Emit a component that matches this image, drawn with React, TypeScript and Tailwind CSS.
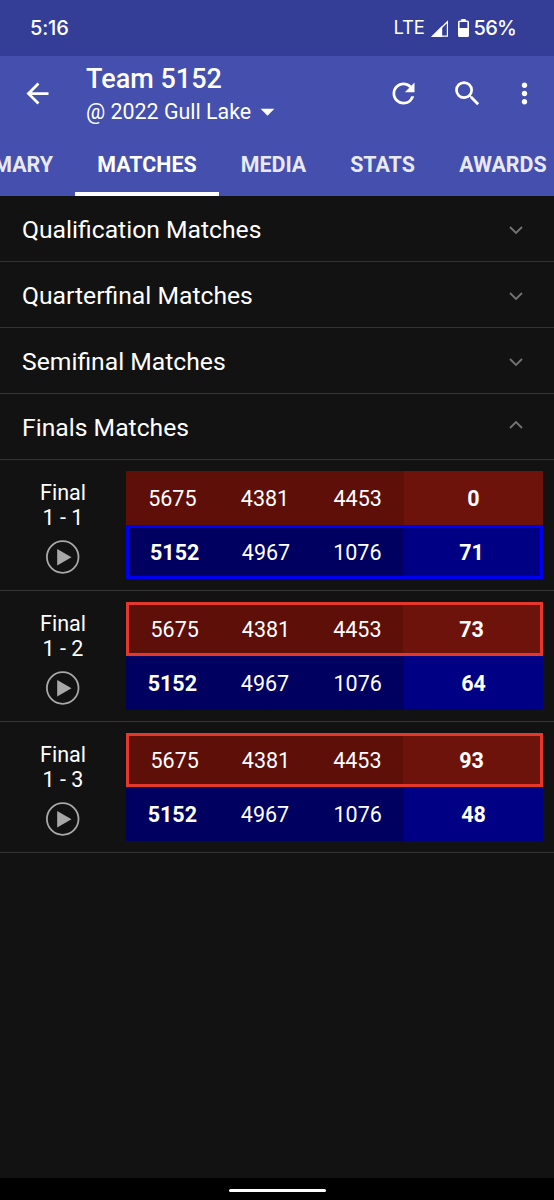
import { useState } from 'react';
import { clsx } from 'clsx';
import { MdArrowBack, MdArrowDropDown, MdMoreVert, MdRefresh, MdSearch } from 'react-icons/md';

interface Alliance {
  teams: string[];
  score: number;
}

interface Match {
  title: string;
  number: string;
  red: Alliance;
  blue: Alliance;
}

const CURRENT_TEAM = '5152';

const tabs = [
  { name: 'Summary', className: 'w-[75px] justify-end pr-[22px]' },
  { name: 'Matches', className: 'w-36 justify-center' },
  { name: 'Media', className: 'w-[109px] justify-center' },
  { name: 'Stats', className: 'w-[109px] justify-center' },
  { name: 'Awards', className: 'w-[132px] justify-center' },
];

const redTeams = ['5675', '4381', '4453'];
const blueTeams = ['5152', '4967', '1076'];

const finals: Match[] = [
  { title: 'Final', number: '1 - 1', red: { teams: redTeams, score: 0 }, blue: { teams: blueTeams, score: 71 } },
  { title: 'Final', number: '1 - 2', red: { teams: redTeams, score: 73 }, blue: { teams: blueTeams, score: 64 } },
  { title: 'Final', number: '1 - 3', red: { teams: redTeams, score: 93 }, blue: { teams: blueTeams, score: 48 } },
];

const sections: { name: string; matches: Match[] }[] = [
  { name: 'Qualification Matches', matches: [] },
  { name: 'Quarterfinal Matches', matches: [] },
  { name: 'Semifinal Matches', matches: [] },
  { name: 'Finals Matches', matches: finals },
];

function StatusBar() {
  return (
    <div className="flex h-14 shrink-0 items-center justify-between bg-[#343e97] pr-[38px] pl-[30px] font-['Inter',sans-serif] text-[20px] font-medium">
      <span className="tracking-[-0.2px]">5:16</span>
      <div className="flex items-center">
        <span className="text-[18.5px] font-normal tracking-[-0.2px]">LTE</span>
        <svg className="ml-1.5 h-[17px] w-[18px]" viewBox="0 0 18 17">
          <path d="M1.8 16.2H16.4V1.8Z" fill="none" stroke="currentColor" strokeWidth="1.2" />
          <path d="M0 17L11.2 5.8V17Z" fill="currentColor" />
        </svg>
        <svg className="ml-[9px] h-[18px] w-[11px]" viewBox="0 0 11 18">
          <path d="M3.3 0H7.7V2H3.3Z" fill="currentColor" />
          <rect x="0.8" y="2.3" width="9.4" height="14.9" rx="0.8" fill="none" stroke="currentColor" strokeWidth="1.6" />
          <path d="M1 9H10V17H1Z" fill="currentColor" />
        </svg>
        <span className="ml-[5px] tracking-[-0.8px]">56%</span>
      </div>
    </div>
  );
}

function Toolbar() {
  return (
    <div className="flex h-[78px] items-center pb-1">
      <button className="ml-[21px]">
        <MdArrowBack className="size-[33px]" />
      </button>
      <div className="ml-8 flex-1 pt-1">
        <h1 className="pt-px text-[27px] leading-8 font-medium">Team {CURRENT_TEAM}</h1>
        <div className="flex items-center text-[21.4px] leading-8">
          <span>@ 2022 Gull Lake</span>
          <MdArrowDropDown className="size-[33px]" />
        </div>
      </div>
      <button className="mr-[31px]">
        <MdRefresh className="size-[33px]" />
      </button>
      <button className="mr-6">
        <MdSearch className="size-[33px]" />
      </button>
      <button className="mr-[13px]">
        <MdMoreVert className="size-[33px]" />
      </button>
    </div>
  );
}

interface TabBarProps {
  active: string;
  onChange: (name: string) => void;
}

function TabBar({ active, onChange }: TabBarProps) {
  return (
    <div className="flex h-[62px] overflow-hidden">
      {tabs.map((tab) => (
        <button
          key={tab.name}
          onClick={() => onChange(tab.name)}
          className={clsx(
            'flex shrink-0 items-center border-b-4 pt-1 text-[21.4px] font-bold uppercase',
            tab.className,
            active === tab.name ? 'border-white text-white' : 'border-transparent text-[#e8e9f4]'
          )}
        >
          {tab.name}
        </button>
      ))}
    </div>
  );
}

interface AllianceRowProps {
  alliance: Alliance;
  color: 'red' | 'blue';
  winner: boolean;
}

function AllianceRow({ alliance, color, winner }: AllianceRowProps) {
  const isRed = color === 'red';

  return (
    <div
      className={clsx(
        'flex h-[54px]',
        isRed ? 'bg-[#5d0f08]' : 'bg-[#000060]',
        winner && 'border-3',
        winner && (isRed ? 'border-[#e5382c]' : 'border-[#0000f0]')
      )}
    >
      {alliance.teams.map((team) => (
        <div
          key={team}
          className={clsx('flex flex-2 items-center justify-center pt-[3px]', team === CURRENT_TEAM && 'font-bold')}
        >
          {team}
        </div>
      ))}
      <div
        className={clsx(
          'flex flex-3 items-center justify-center pt-[3px] font-bold',
          isRed ? 'bg-[#6d130b]' : 'bg-[#000084]'
        )}
      >
        {alliance.score}
      </div>
    </div>
  );
}

function MatchRow({ match }: { match: Match }) {
  return (
    <div className="flex h-[131px] border-b border-[#333333] pr-[11px] text-[21.5px]">
      <div className="flex w-[126px] flex-col items-center pt-5 leading-[25px]">
        <span>{match.title}</span>
        <span>{match.number}</span>
        <svg className="mt-2.5 size-[34px]" viewBox="0 0 34 34">
          <circle cx="16.7" cy="17" r="15.8" fill="none" stroke="#a8a8a8" strokeWidth="1.8" />
          <path d="M11.2 9V25.5L25.5 17.2Z" fill="#a8a8a8" />
        </svg>
      </div>
      <div className="flex-1 pt-[11px]">
        <AllianceRow alliance={match.red} color="red" winner={match.red.score > match.blue.score} />
        <AllianceRow alliance={match.blue} color="blue" winner={match.blue.score > match.red.score} />
      </div>
    </div>
  );
}

function Chevron({ open }: { open: boolean }) {
  return (
    <svg className={clsx('h-2 w-3.5', open && 'mb-1.5 rotate-180')} viewBox="0 0 14 8">
      <path d="M1 1L7 7L13 1" fill="none" stroke="#737373" strokeWidth="1.8" />
    </svg>
  );
}

export default function App() {
  const [activeTab, setActiveTab] = useState('Matches');
  const [openSection, setOpenSection] = useState('Finals Matches');

  return (
    <div className="flex h-[1200px] w-[554px] flex-col overflow-hidden bg-[#121212] font-['Roboto',sans-serif] text-white">
      <StatusBar />

      <header className="shrink-0 bg-[#444fae]">
        <Toolbar />
        <TabBar active={activeTab} onChange={setActiveTab} />
      </header>

      <main className="flex-1">
        {sections.map((section) => {
          const open = openSection === section.name;
          return (
            <section key={section.name}>
              <button
                onClick={() => setOpenSection(open ? '' : section.name)}
                className="flex h-[66px] w-full items-center justify-between border-b border-[#333333] pt-0.5 pr-[31px] pl-[22px] text-[24.7px]"
              >
                <span>{section.name}</span>
                <Chevron open={open} />
              </button>
              {open && section.matches.map((match) => <MatchRow key={match.number} match={match} />)}
            </section>
          );
        })}
      </main>

      {/* Gesture bar */}
      <div className="flex h-[22px] shrink-0 justify-center bg-black pt-[11px]">
        <div className="h-[3px] w-[97px] rounded-full bg-white" />
      </div>
    </div>
  );
}
